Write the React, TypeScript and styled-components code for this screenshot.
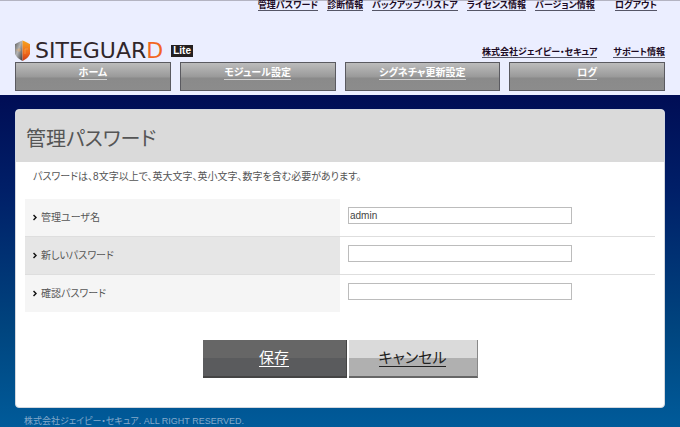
import React from "react";
import styled, { createGlobalStyle } from "styled-components";

const GlobalStyle = createGlobalStyle`
  *, *::before, *::after { box-sizing: border-box; }
  html { min-height: 100%; background: linear-gradient(#000d55 95px, #001f68 190px, #00457f 330px, #005b9a 427px) no-repeat #005b9a; }
  body {
    margin: 0;
    font-family: "Liberation Sans", "Noto Sans CJK JP", sans-serif;
    font-size: 10px;
    line-height: 12px;
    color: #555;
    font-feature-settings: "palt";
  }
`;

const Header = styled.header`
  background: #ebeeff;
  border-top: 1px solid #b4b4c2;
  padding: 0 15px 4px;
`;

const LinkRow = styled.nav`
  display: flex;
  justify-content: flex-end;
  gap: 9px;
  padding-right: 8px;
`;

const TopLink = styled.a<{ $apart?: boolean }>`
  margin-left: ${(p) => (p.$apart ? "11px" : "0")};
  border-bottom: 1px solid #555566;
  color: #1c0a24;
  font-size: 9px;
  line-height: 9px;
  font-weight: 700;
  text-decoration: none;
  white-space: nowrap;
`;

const Masthead = styled.div`
  display: flex;
  justify-content: space-between;
  align-items: flex-end;
  margin-top: 28px;
  height: 23px;
`;

const Logo = styled.a`
  display: flex;
  align-items: center;
  gap: 4px;
  height: 23px;
  color: #30262a;
  text-decoration: none;
`;

const Wordmark = styled.span`
  margin-right: 4px;
  font-family: "DejaVu Sans", sans-serif;
  font-size: 22px;
  line-height: 22px;
`;

const Accent = styled.span`
  color: #f2661f;
`;

const Edition = styled.span`
  padding: 0 2px;
  background: #231f20;
  color: #fff;
  font-size: 10px;
  line-height: 12px;
  font-weight: 700;
`;

const CompanyLinks = styled.div`
  display: flex;
  gap: 16px;
  margin-bottom: 4px;
`;

const MainNav = styled.nav`
  display: grid;
  grid-template-columns: repeat(4, 1fr);
  gap: 9px;
`;

const NavTab = styled.a`
  height: 29px;
  padding-top: 4px;
  border: 1px solid #5a5a60;
  background: linear-gradient(#bcbcbc, #999 14px, #8a8a8a 15px, #8c8c8c);
  color: #fff;
  text-align: center;
  text-decoration: none;
  font-weight: 700;
  line-height: 12px;
`;

const TabLabel = styled.span`
  display: inline-block;
  border-bottom: 1px solid #d0d0d0;
`;

const Panel = styled.main`
  margin: 14px 15px 0;
  padding-bottom: 29px;
  border: 1px solid #d3d7de;
  border-radius: 4px;
  background: #fff;
  overflow: hidden;
`;

const Title = styled.h1`
  margin: 0;
  padding: 17px 10px 10px;
  background: #dadada;
  color: #555;
  font-size: 20px;
  line-height: 25px;
  font-weight: 400;
`;

const Hint = styled.p`
  margin: 9px 17px 16px;
`;

const Fields = styled.div`
  margin: 0 9px;
`;

const Field = styled.div`
  display: grid;
  grid-template-columns: 1fr 1fr;
  border-bottom: 1px solid #dedede;
  &:last-child { border-bottom: 0; }
  &:nth-child(even) > label { background: #e6e6e6; }
`;

const FieldLabel = styled.label`
  display: flex;
  align-items: center;
  gap: 4px;
  height: 37px;
  padding-left: 8px;
  background: #f5f5f5;
`;

const Control = styled.div`
  padding: 8px 8px 0;
`;

const TextBox = styled.input`
  display: block;
  width: 75%;
  height: 17px;
  padding: 0 1px;
  border: 1px solid #bcbcbc;
  border-radius: 0;
  background: #fff;
  color: #444;
  font: 10px "Liberation Sans", sans-serif;
  outline: none;
`;

const Actions = styled.div`
  display: flex;
  justify-content: center;
  gap: 2px;
  margin-top: 28px;
`;

const Action = styled.button<{ $primary?: boolean }>`
  width: ${(p) => (p.$primary ? "144px" : "129px")};
  height: 38px;
  padding: 0;
  border: 0;
  border-right: 1px solid ${(p) => (p.$primary ? "#444" : "#888")};
  border-bottom: 2px solid ${(p) => (p.$primary ? "#444" : "#666")};
  background: ${(p) =>
    p.$primary
      ? "linear-gradient(#666 50%, #5a5b5d 50%)"
      : "linear-gradient(#dadada 50%, #b0b0b0 50%)"};
  color: ${(p) => (p.$primary ? "#fff" : "#222")};
  font: 15px/17px "Liberation Sans", "Noto Sans CJK JP", sans-serif;
  font-feature-settings: "palt";
`;

const ActionLabel = styled.span`
  display: inline-block;
  border-bottom: 1px solid currentColor;
`;

const Footer = styled.footer`
  padding: 7px 24px 0;
  color: #83a9cb;
  font-size: 9px;
  line-height: 12px;
`;

const Shield = () => (
  <svg width="16" height="22" viewBox="0 0 16 22" aria-hidden="true">
    <defs>
      <linearGradient id="steel" x1="0" y1="0" x2="1" y2="1">
        <stop offset="0" stopColor="#5b5b5b" />
        <stop offset=".45" stopColor="#b4b4b4" />
        <stop offset="1" stopColor="#333" />
      </linearGradient>
      <linearGradient id="flame" x1="0" y1="0" x2="0" y2="1">
        <stop offset="0" stopColor="#f7a51e" />
        <stop offset=".6" stopColor="#ef6a1b" />
        <stop offset="1" stopColor="#c93a16" />
      </linearGradient>
    </defs>
    <path d="M7.500 0.500C5 1.500 2 3 0 4V14C1 17 4 19 7.500 21Z" fill="url(#steel)" />
    <path d="M7.500 0.500C10 1.500 13 3 15 4V14C14 17 11 19 7.500 21Z" fill="url(#flame)" />
    <path d="M1 10H6M4 8V12M10 14V9H13" stroke="#f3b06a" strokeOpacity=".5" fill="none" />
  </svg>
);

const Bullet = () => (
  <svg width="4" height="7" viewBox="0 0 4 7" aria-hidden="true">
    <path d="M0.500 1L3 3.500L0.500 6" stroke="#111" strokeWidth="1.500" fill="none" />
  </svg>
);

const topLinks = [
  "管理パスワード",
  "診断情報",
  "バックアップ・リストア",
  "ライセンス情報",
  "バージョン情報",
  "ログアウト",
];
const tabs = ["ホーム", "モジュール設定", "シグネチャ更新設定", "ログ"];
const fields = [
  { id: "user", label: "管理ユーザ名", type: "text", value: "admin" },
  { id: "password", label: "新しいパスワード", type: "password", value: "" },
  { id: "confirm", label: "確認パスワード", type: "password", value: "" },
];

export default function App() {
  return (
    <>
      <GlobalStyle />
      <Header>
        <LinkRow>
          {topLinks.map((text, i) => (
            <TopLink key={text} href="#" $apart={i === topLinks.length - 1}>
              {text}
            </TopLink>
          ))}
        </LinkRow>
        <Masthead>
          <Logo href="#">
            <Shield />
            <Wordmark>
              SITEGUAR<Accent>D</Accent>
            </Wordmark>
            <Edition>Lite</Edition>
          </Logo>
          <CompanyLinks>
            <TopLink href="#">株式会社ジェイピー・セキュア</TopLink>
            <TopLink href="#">サポート情報</TopLink>
          </CompanyLinks>
        </Masthead>
        <MainNav>
          {tabs.map((text) => (
            <NavTab key={text} href="#">
              <TabLabel>{text}</TabLabel>
            </NavTab>
          ))}
        </MainNav>
      </Header>
      <Panel>
        <Title>管理パスワード</Title>
        <Hint>パスワードは、8文字以上で、英大文字、英小文字、数字を含む必要があります。</Hint>
        <form onSubmit={(e) => e.preventDefault()}>
          <Fields>
            {fields.map((f) => (
              <Field key={f.id}>
                <FieldLabel htmlFor={f.id}>
                  <Bullet />
                  {f.label}
                </FieldLabel>
                <Control>
                  <TextBox id={f.id} type={f.type} defaultValue={f.value} />
                </Control>
              </Field>
            ))}
          </Fields>
          <Actions>
            <Action type="submit" $primary>
              <ActionLabel>保存</ActionLabel>
            </Action>
            <Action type="button">
              <ActionLabel>キャンセル</ActionLabel>
            </Action>
          </Actions>
        </form>
      </Panel>
      <Footer>株式会社ジェイピー・セキュア. ALL RIGHT RESERVED.</Footer>
    </>
  );
}
